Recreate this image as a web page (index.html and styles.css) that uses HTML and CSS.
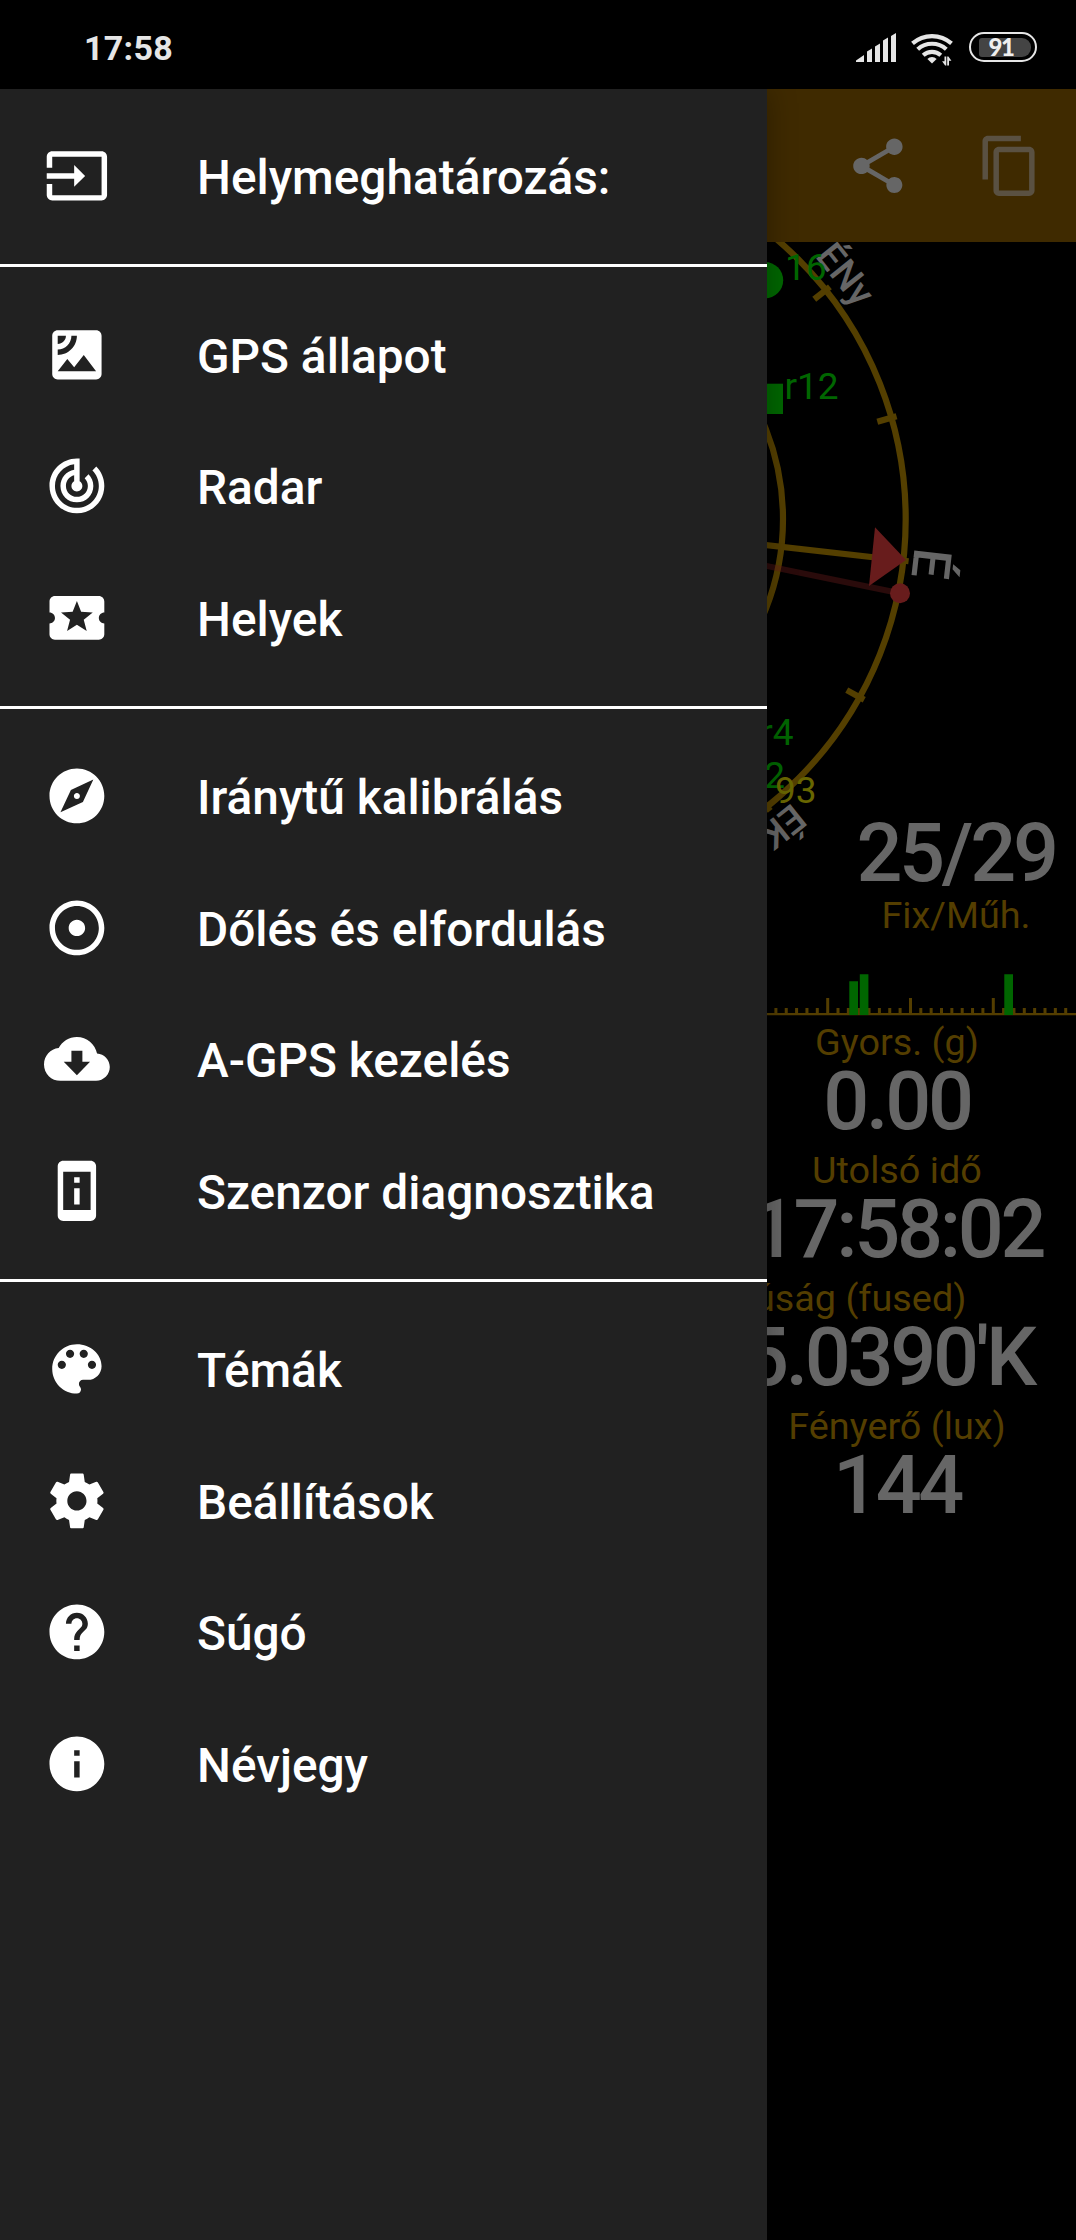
FILE: index.html
```html
<!DOCTYPE html>
<html lang="hu">
<head>
<meta charset="utf-8">
<title>GPS állapot</title>
<link rel="stylesheet" href="styles.css">
</head>
<body>
<div class="screen">
  <header class="status">
    <time class="clock">17:58</time>
    <div class="indicators">
      <svg class="signal" viewBox="0 0 40 29"><path d="M0 29v-1.5L8 22v7zM11 29V18.5l5-3V29zM19 29V13.5l5-3V29zM27 29V7.5l5-3V29zM35 29V3l5-3v29z"/></svg>
      <svg class="wifi" viewBox="0 0 44 33">
        <g fill="none" stroke="#e6e6e6" stroke-width="4.2">
          <path d="M1.5 10.4a29.5 29.5 0 0 1 39 0"/><path d="M6.7 16.2a21.5 21.5 0 0 1 28.6 0"/><path d="M12.2 22.2a13.3 13.3 0 0 1 17.6 0"/>
        </g>
        <path d="M21 30.5l-4.6-4.6a6.6 6.6 0 0 1 9.2 0z"/>
        <path d="M33.5 23.5h1.8v9h-1.2l-3-4.3h2.4zM38 32.5h-1.8v-9h1.2l3 4.3H38z"/>
      </svg>
      <span class="battery"><span class="charge">91</span></span>
    </div>
  </header>

  <div class="toolbar">
    <svg class="icon share" viewBox="0 0 24 24"><path d="M18 16.08c-.76 0-1.44.3-1.96.77L8.91 12.7c.05-.23.09-.46.09-.7s-.04-.47-.09-.7l7.05-4.11c.54.5 1.25.81 2.04.81 1.66 0 3-1.34 3-3s-1.34-3-3-3-3 1.34-3 3c0 .24.04.47.09.7L8.04 9.81C7.5 9.31 6.79 9 6 9c-1.66 0-3 1.34-3 3s1.34 3 3 3c.79 0 1.5-.31 2.04-.81l7.12 4.16c-.05.21-.08.43-.08.65 0 1.61 1.31 2.92 2.92 2.92s2.92-1.31 2.92-2.92-1.31-2.92-2.92-2.92z"/></svg>
    <svg class="icon copy" viewBox="0 0 24 24"><path d="M16 1H4c-1.1 0-2 .9-2 2v14h2V3h12V1zm3 4H8c-1.1 0-2 .9-2 2v14c0 1.1.9 2 2 2h11c1.1 0 2-.9 2-2V7c0-1.1-.9-2-2-2zm0 16H8V7h11v14z"/></svg>
  </div>

  <main class="content">
    <section class="sky">
      <svg class="dial" viewBox="0 242 1076 728">
        <g class="ring">
          <circle cx="538" cy="519" r="367.7"/><circle cx="538" cy="519" r="245"/>
          <path transform="translate(538 519) rotate(6.5)" d="M0 0H373"/>
          <path transform="translate(538 519) rotate(-16)" d="M353 0H373"/>
          <path transform="translate(538 519) rotate(-38.5)" d="M353 0H373"/>
          <path transform="translate(538 519) rotate(29)" d="M353 0H373"/>
          <path transform="translate(538 519) rotate(51.5)" d="M353 0H373"/>
        </g>
        <path class="bearing" d="M538 519L900 593.3"/>
        <path class="red" d="M875 527.3L906 560 869 586z"/>
        <circle class="red" cx="900" cy="593.3" r="10"/>
        <g class="cardinal">
          <text transform="translate(538 519) rotate(51.5)" y="-380">ÉNy</text>
          <text class="north" transform="translate(538 519) rotate(96.5)" y="-377.5">É</text>
          <text transform="translate(538 519) rotate(141.5)" y="-380">ÉK</text>
        </g>
        <g class="sat">
          <circle cx="765" cy="280.2" r="18.2"/><path d="M753 383.7h30V414h-30z"/>
          <text x="785" y="280">16</text><text x="784.5" y="398.5">r12</text>
          <text x="793.5" y="745" text-anchor="end">r4</text><text x="785" y="788" text-anchor="end">2</text>
          <text class="weak" x="775" y="803">93</text>
        </g>
      </svg>
      <div class="fix"><div class="value">25/29</div><div class="label">Fix/Műh.</div></div>
    </section>

    <svg class="bars" viewBox="0 970 1076 46">
      <path class="axis" d="M0 1014.2H1076"/>
      <path class="minor" d="M775.9 1014v-6m10.35 6v-6m10.35 6v-6m10.35 6v-6m10.35 6v-6m20.7 6v-6m10.35 6v-6m10.35 6v-6m10.35 6v-6m10.35 6v-6m10.35 6v-6m10.35 6v-6m20.7 6v-6m10.35 6v-6m10.35 6v-6m10.35 6v-6m10.35 6v-6m10.35 6v-6m10.35 6v-6m20.7 6v-6m10.35 6v-6m10.35 6v-6m10.35 6v-6m10.35 6v-6m10.35 6v-6m10.35 6v-6"/>
      <path class="minor" d="M827.7 1014v-16M910.5 1014v-16M993.3 1014v-16"/>
      <path class="level" d="M849.3 981.2h8.7V1015h-8.7zM859.8 974.3h8.6V1015h-8.6zM1004.3 974.3h8.7V1015h-8.7z"/>
    </svg>

    <div class="readings">
      <div class="cell third"><div class="label">Gyors. (g)</div><div class="value">0.00</div></div>
      <div class="cell third"><div class="label">Utolsó idő</div><div class="value">17:58:02</div></div>
      <div class="cell half"><div class="label">Hosszúság (fused)</div><div class="value">19°05.0390'K</div></div>
      <div class="cell third"><div class="label">Fényerő (lux)</div><div class="value">144</div></div>
    </div>
  </main>

  <nav class="drawer">
    <ul class="group">
      <li><svg class="icon" viewBox="0 0 24 24"><path d="M21 3.01H3c-1.1 0-2 .9-2 2V9h2V4.99h18v14.03H3V15H1v4.01c0 1.1.9 1.98 2 1.98h18c1.1 0 2-.88 2-1.98v-14c0-1.11-.9-2-2-2zM11 16l4-4-4-4v3H1v2h10v3z"/></svg><span>Helymeghatározás:</span></li>
    </ul>
    <ul class="group">
      <li><svg class="icon" viewBox="0 0 24 24"><path d="M19 3H5c-1.1 0-2 .9-2 2v14c0 1.1.9 2 2 2h14c1.1 0 2-.9 2-2V5c0-1.1-.9-2-2-2zM5 4.99h3C8 6.65 6.66 8 5 8V4.99zM5 12v-2c2.76 0 5-2.25 5-5.01h2C12 8.86 8.87 12 5 12zm0 6l3.5-4.5 2.5 3.01L14.5 12l4.5 6H5z"/></svg><span>GPS állapot</span></li>
      <li><svg class="icon" viewBox="0 0 24 24"><path d="M19.07 4.93l-1.41 1.41C19.1 7.79 20 9.79 20 12c0 4.42-3.58 8-8 8s-8-3.58-8-8c0-4.08 3.05-7.44 7-7.93v2.02C8.16 6.57 6 9.03 6 12c0 3.31 2.69 6 6 6s6-2.69 6-6c0-1.66-.67-3.16-1.76-4.24l-1.41 1.41C15.55 9.9 16 10.9 16 12c0 2.21-1.79 4-4 4s-4-1.79-4-4c0-1.86 1.28-3.41 3-3.86v2.14c-.6.35-1 .98-1 1.72 0 1.1.9 2 2 2s2-.9 2-2c0-.74-.4-1.38-1-1.72V2h-1C6.48 2 2 6.48 2 12s4.48 10 10 10 10-4.48 10-10c0-2.76-1.12-5.26-2.93-7.07z"/></svg><span>Radar</span></li>
      <li><svg class="icon" viewBox="0 0 24 24"><path d="M20 12c0-1.1.9-2 2-2V6c0-1.1-.9-2-2-2H4c-1.1 0-1.99.9-1.99 2v4c1.1 0 1.99.9 1.99 2s-.89 2-2 2v4c0 1.1.9 2 2 2h16c1.1 0 2-.9 2-2v-4c-1.1 0-2-.9-2-2zm-4.42 4.8L12 14.5l-3.58 2.3 1.08-4.12-3.29-2.69 4.24-.25L12 5.8l1.54 3.95 4.24.25-3.29 2.69 1.09 4.11z"/></svg><span>Helyek</span></li>
    </ul>
    <ul class="group">
      <li><svg class="icon" viewBox="0 0 24 24"><path d="M12 10.9c-.61 0-1.1.49-1.1 1.1s.49 1.1 1.1 1.1c.61 0 1.1-.49 1.1-1.1s-.49-1.1-1.1-1.1zM12 2C6.48 2 2 6.48 2 12s4.48 10 10 10 10-4.48 10-10S17.52 2 12 2zm2.19 12.19L6 18l3.81-8.19L18 6l-3.81 8.19z"/></svg><span>Iránytű kalibrálás</span></li>
      <li><svg class="icon" viewBox="0 0 24 24"><path d="M12 2C6.49 2 2 6.49 2 12s4.49 10 10 10 10-4.49 10-10S17.51 2 12 2zm0 18c-4.41 0-8-3.59-8-8s3.59-8 8-8 8 3.59 8 8-3.59 8-8 8zm3-8c0 1.66-1.34 3-3 3s-3-1.34-3-3 1.34-3 3-3 3 1.34 3 3z"/></svg><span>Dőlés és elfordulás</span></li>
      <li><svg class="icon" viewBox="0 0 24 24"><path d="M19.35 10.04C18.67 6.59 15.64 4 12 4 9.11 4 6.6 5.64 5.35 8.04 2.34 8.36 0 10.91 0 14c0 3.31 2.69 6 6 6h13c2.76 0 5-2.24 5-5 0-2.64-2.05-4.78-4.65-4.96zM16.8 13L12 18l-4.8-5H10V9h4v4h2.8z"/></svg><span>A-GPS kezelés</span></li>
      <li><svg class="icon" viewBox="0 0 24 24"><path d="M13 7h-2v2h2V7zm0 4h-2v6h2v-6zm4-9.99L7 1c-1.1 0-2 .9-2 2v18c0 1.1.9 2 2 2h10c1.1 0 2-.9 2-2V3c0-1.1-.9-1.99-2-1.99zM17 19H7V5h10v14z"/></svg><span>Szenzor diagnosztika</span></li>
    </ul>
    <ul class="group">
      <li><svg class="icon" viewBox="0 0 24 24"><path d="M12 3c-4.97 0-9 4.03-9 9s4.03 9 9 9c.83 0 1.5-.67 1.5-1.5 0-.39-.15-.74-.39-1.01-.23-.26-.38-.61-.38-.99 0-.83.67-1.5 1.5-1.5H16c2.76 0 5-2.24 5-5 0-4.42-4.03-8-9-8zm-5.5 9c-.83 0-1.5-.67-1.5-1.5S5.67 9 6.5 9 8 9.67 8 10.5 7.33 12 6.5 12zm3-4C8.67 8 8 7.33 8 6.5S8.67 5 9.5 5s1.5.67 1.5 1.5S10.33 8 9.5 8zm5 0c-.83 0-1.5-.67-1.5-1.5S13.67 5 14.5 5s1.5.67 1.5 1.5S15.33 8 14.5 8zm3 4c-.83 0-1.5-.67-1.5-1.5S16.67 9 17.5 9s1.5.67 1.5 1.5-.67 1.5-1.5 1.5z"/></svg><span>Témák</span></li>
      <li><svg class="icon" viewBox="0 0 24 24"><path d="M19.43 12.98c.04-.32.07-.64.07-.98s-.03-.66-.07-.98l2.11-1.65c.19-.15.24-.42.12-.64l-2-3.46c-.12-.22-.39-.3-.61-.22l-2.49 1c-.52-.4-1.08-.73-1.69-.98l-.38-2.65C14.46 2.18 14.25 2 14 2h-4c-.25 0-.46.18-.49.42l-.38 2.65c-.61.25-1.17.59-1.69.98l-2.49-1c-.23-.09-.49 0-.61.22l-2 3.46c-.13.22-.07.49.12.64l2.11 1.65c-.04.32-.07.65-.07.98s.03.66.07.98l-2.11 1.65c-.19.15-.24.42-.12.64l2 3.46c.12.22.39.3.61.22l2.49-1c.52.4 1.08.73 1.69.98l.38 2.65c.03.24.24.42.49.42h4c.25 0 .46-.18.49-.42l.38-2.65c.61-.25 1.17-.59 1.69-.98l2.49 1c.23.09.49 0 .61-.22l2-3.46c.12-.22.07-.49-.12-.64l-2.11-1.65zM12 15.5c-1.93 0-3.5-1.57-3.5-3.5s1.57-3.5 3.5-3.5 3.5 1.57 3.5 3.5-1.57 3.5-3.5 3.5z"/></svg><span>Beállítások</span></li>
      <li><svg class="icon" viewBox="0 0 24 24"><path d="M12 2C6.48 2 2 6.48 2 12s4.48 10 10 10 10-4.48 10-10S17.52 2 12 2zm1 17h-2v-2h2v2zm2.07-7.75l-.9.92C13.45 12.9 13 13.5 13 15h-2v-.5c0-1.1.45-2.1 1.17-2.83l1.24-1.26c.37-.36.59-.86.59-1.41 0-1.1-.9-2-2-2s-2 .9-2 2H8c0-2.21 1.79-4 4-4s4 1.79 4 4c0 .88-.36 1.68-.93 2.25z"/></svg><span>Súgó</span></li>
      <li><svg class="icon" viewBox="0 0 24 24"><path d="M12 2C6.48 2 2 6.48 2 12s4.48 10 10 10 10-4.48 10-10S17.52 2 12 2zm1 15h-2v-6h2v6zm0-8h-2V7h2v2z"/></svg><span>Névjegy</span></li>
    </ul>
  </nav>
</div>
</body>
</html>
```
FILE: styles.css
```css
* { box-sizing: border-box; }

body {
  margin: 0;
  background: #000;
  font-family: Roboto, "Liberation Sans", sans-serif;
}

.screen {
  position: relative;
  display: flex;
  flex-direction: column;
  width: 1076px;
  height: 2240px;
  overflow: hidden;
  background: #000;
}

/* Status bar */
.status {
  display: flex;
  align-items: center;
  justify-content: space-between;
  flex: none;
  height: 89px;
  padding: 5px 39px 0 84px;
  color: #e6e6e6;
}

.clock {
  font-size: 34px;
  font-weight: 700;
  letter-spacing: 0.3px;
  padding-top: 2px;
}

.indicators { display: flex; align-items: center; fill: #e6e6e6; }
.signal { width: 40px; height: 29px; margin-right: 15px; }
.wifi { width: 44px; height: 33px; margin: 4px 14px 0 0; }

.battery {
  display: flex;
  width: 68px;
  height: 30px;
  padding: 3.5px 4px;
  border: 2.5px solid #e6e6e6;
  border-radius: 15px;
}

.charge {
  flex: 1;
  margin-left: 4px;
  border-radius: 3px 9px 9px 3px;
  background: #444;
  color: #f0f0f0;
  font: 900 24px/18px Lato, sans-serif;
  letter-spacing: -1.5px;
  text-align: center;
  padding-right: 8px;
}

/* Toolbar */
.toolbar {
  display: flex;
  align-items: center;
  justify-content: flex-end;
  flex: none;
  gap: 66px;
  height: 153px;
  padding-right: 33px;
  background: #3f2a00;
}

.icon { flex: none; display: block; width: 65.8px; height: 65.8px; fill: #fff; }
.share { fill: #666; }
.copy { fill: #5a5142; }

/* Sky view */
.sky { position: relative; display: flex; justify-content: flex-end; height: 728px; }
.dial { position: absolute; inset: 0; width: 1076px; height: 728px; }
.ring { fill: none; stroke: #543f00; stroke-width: 6.2; }
.bearing { stroke: rgba(104, 28, 28, 0.4); stroke-width: 6; }
.red { fill: #681c1c; }
.cardinal { fill: #666; font-size: 38px; font-weight: 500; text-anchor: middle; }
.north { font-size: 53px; }
.sat { fill: #006600; font-size: 37px; }
.weak { fill: #686600; }

.fix { width: 240px; padding-top: 573px; text-align: center; }
.fix .label { margin-top: 1px; }

.label { color: #543e00; font-size: 37.8px; line-height: 42px; white-space: nowrap; }
.value {
  color: #666;
  font-size: 81px;
  font-weight: 500;
  line-height: 78px;
  letter-spacing: -3.3px;
  white-space: nowrap;
}

/* Signal level chart */
.bars { display: block; width: 1076px; height: 46px; }
.axis { stroke: #543e00; stroke-width: 2.2; }
.minor { stroke: #543e00; stroke-width: 3; }
.level { fill: #006600; }

/* Readings */
.readings {
  display: flex;
  flex-direction: column;
  align-items: flex-end;
  gap: 8px;
  padding-top: 4.7px;
}
.cell { text-align: center; }
.third { width: 358px; }
.half { width: 538px; }
.half .value { padding-left: 7px; }

/* Navigation drawer */
.drawer {
  position: absolute;
  top: 89px;
  bottom: 0;
  left: 0;
  width: 767px;
  background: #212121;
  box-shadow: 0 0 28px rgba(0, 0, 0, 0.3);
  clip-path: inset(0 -40px 0 0);
}

.group { list-style: none; margin: 0; padding: 22px 0; }
.group:first-child { padding: 21.5px 0 22px; }
.group + .group { border-top: 3px solid #fff; }

.group li {
  display: flex;
  align-items: center;
  gap: 87.2px;
  height: 131.5px;
  padding-left: 44px;
  color: #fff;
  font-size: 47.8px;
  font-weight: 500;
}
.group span { padding-top: 3.6px; white-space: nowrap; }
```
